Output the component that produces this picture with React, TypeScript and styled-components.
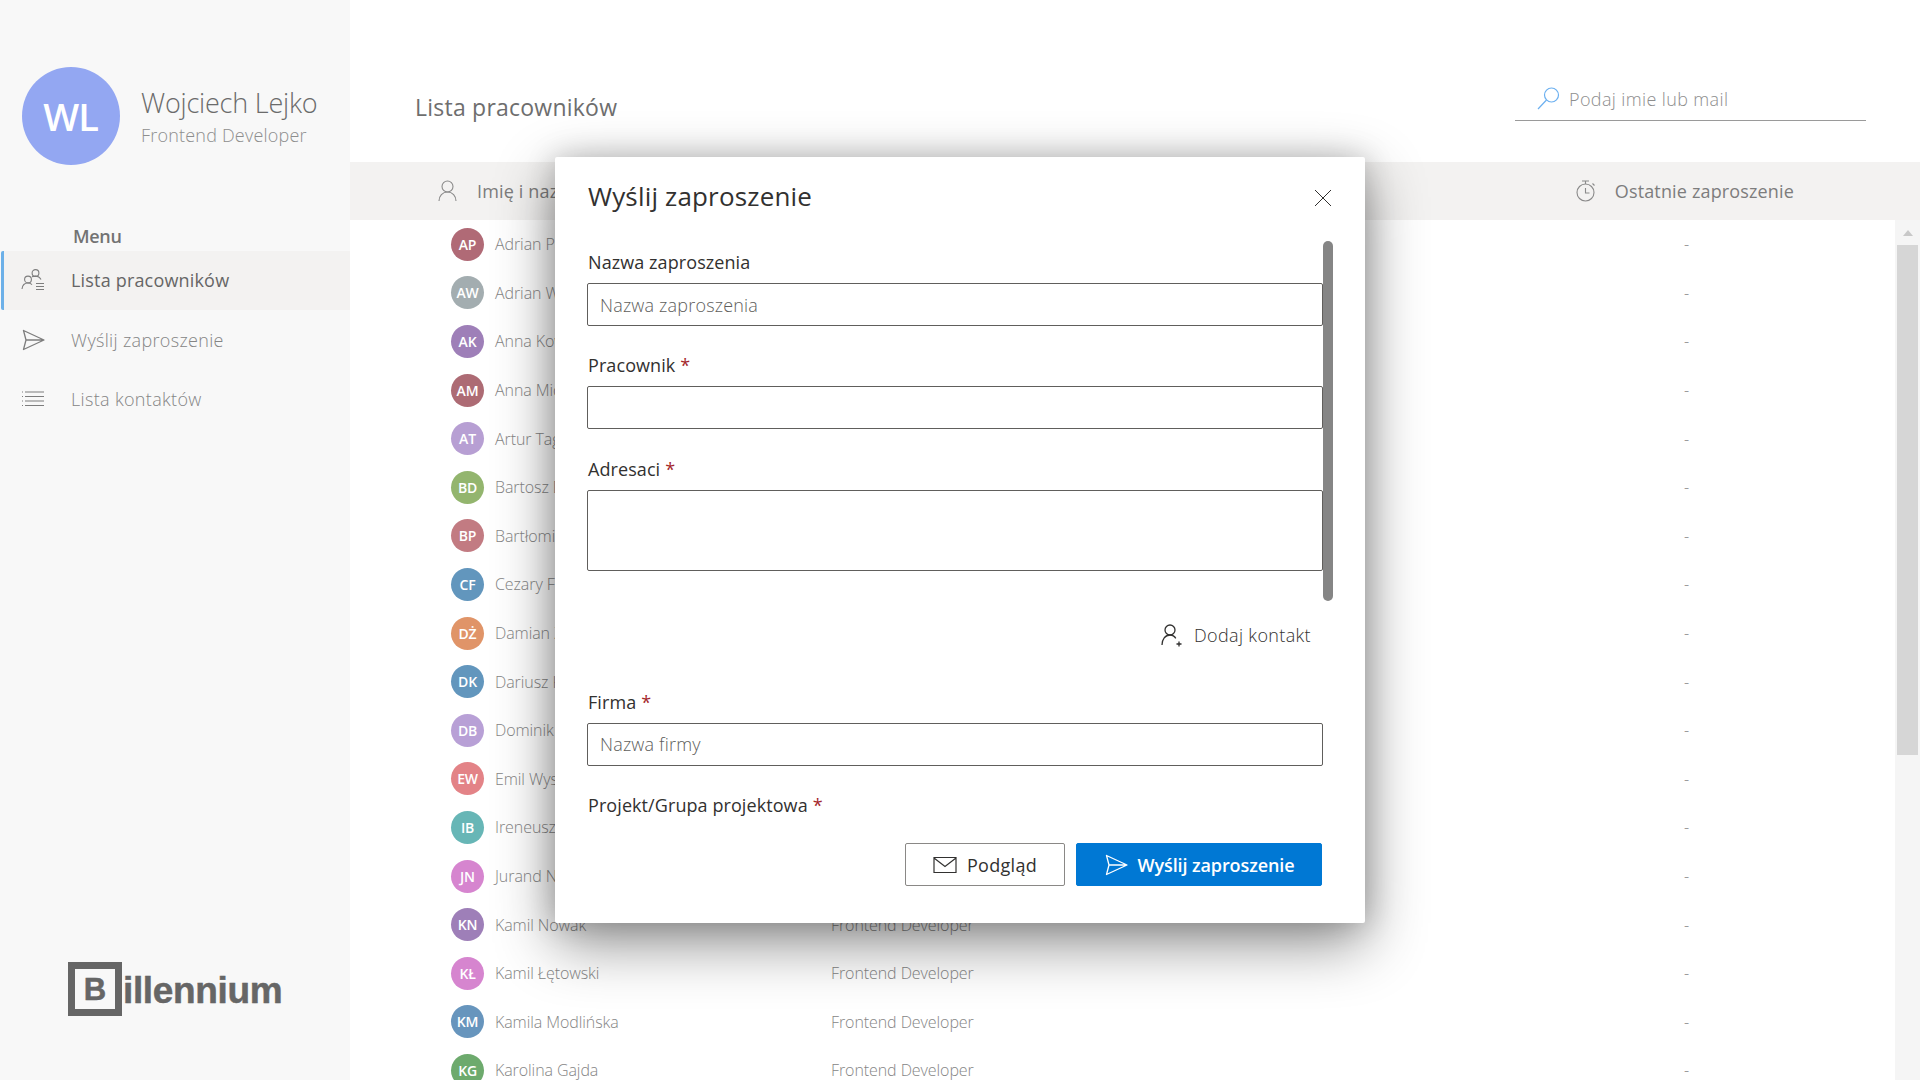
import styled, { createGlobalStyle } from 'styled-components';

const GlobalStyle = createGlobalStyle`
  html, body {
    margin: 0;
    height: 100%;
    overflow: hidden;
    background: #fff;
  }
  body, input, button, textarea {
    font-family: "Open Sans", "Noto Sans", sans-serif;
  }
  * {
    box-sizing: border-box;
  }
`;

const Page = styled.div`
  display: flex;
  width: 1920px;
  height: 1080px;
  overflow: hidden;
  position: relative;
`;

const Sidebar = styled.aside`
  width: 350px;
  flex-shrink: 0;
  display: flex;
  flex-direction: column;
  background: #f8f8f8;
  padding-top: 67px;
`;

const Profile = styled.div`
  display: flex;
  align-items: center;
  gap: 21px;
  padding-left: 22px;
`;

const ProfileAvatar = styled.div`
  width: 98px;
  height: 98px;
  border-radius: 50%;
  background: #93a7f2;
  color: #fff;
  font-size: 38px;
  font-weight: 600;
  letter-spacing: -1px;
  padding-right: 1px;
  display: flex;
  align-items: center;
  justify-content: center;
`;

const ProfileName = styled.div`
  font-size: 27px;
  font-weight: 300;
  line-height: 36px;
  letter-spacing: -0.2px;
  color: #6b6b6b;
`;

const ProfileRole = styled.div`
  margin-top: 1px;
  font-size: 18px;
  font-weight: 300;
  line-height: 26px;
  letter-spacing: 0.2px;
  color: #8e8e8e;
`;

const MenuTitle = styled.div`
  margin: 58px 0 2px 73px;
  font-size: 18px;
  font-weight: 600;
  line-height: 26px;
  letter-spacing: -0.3px;
  color: #737373;
`;

const Nav = styled.nav`
  display: flex;
  flex-direction: column;
  gap: 1px;
`;

const NavItem = styled.div<{ $active?: boolean }>`
  height: 58.5px;
  display: flex;
  align-items: center;
  gap: 26px;
  margin-left: 1px;
  padding-left: 17px;
  font-size: 18px;
  letter-spacing: ${(p) => (p.$active ? '0.18px' : '0.33px')};
  font-weight: ${(p) => (p.$active ? 500 : 300)};
  color: ${(p) => (p.$active ? '#666' : '#858585')};
  background: ${(p) => (p.$active ? '#f3f2f1' : 'transparent')};
  border-left: 3px solid ${(p) => (p.$active ? '#6cb0e8' : 'transparent')};
  border-radius: 2px 0 0 2px;

  svg {
    flex-shrink: 0;
    width: 24px;
    height: 24px;
  }
`;

const Logo = styled.div`
  margin: auto 0 64px 68px;
  display: flex;
  align-items: center;
  gap: 1px;
  color: #666;
  font-family: "Liberation Sans", Arial, sans-serif;
  font-weight: 700;
  -webkit-text-stroke: 0.5px #666;
`;

const LogoBox = styled.div`
  width: 54px;
  height: 54px;
  border: 7px solid #666;
  display: flex;
  align-items: center;
  justify-content: center;
  font-size: 31px;
  line-height: 1;
`;

const LogoText = styled.div`
  font-size: 37px;
  line-height: 1;
  letter-spacing: -0.35px;
  margin-top: 3px;
`;

const Main = styled.main`
  flex: 1;
  min-width: 0;
  display: flex;
  flex-direction: column;
`;

const TopBar = styled.div`
  height: 162px;
  flex-shrink: 0;
  display: flex;
  justify-content: space-between;
  padding: 88px 54px 0 65px;
`;

const PageTitle = styled.h1`
  margin: 0;
  font-size: 23px;
  font-weight: 500;
  line-height: 38px;
  letter-spacing: 0.23px;
  color: #6e6e6e;
`;

const SearchBox = styled.div`
  width: 351px;
  height: 34px;
  margin-top: -1px;
  border-bottom: 1px solid #9a9a9a;
  display: flex;
  align-items: flex-start;
  gap: 9px;
  padding-left: 22px;
  font-size: 18px;
  font-weight: 300;
  line-height: 24px;
  letter-spacing: 0.37px;
  color: #8e8e8e;

  svg {
    width: 23px;
    height: 23px;
    flex-shrink: 0;
  }
`;

const TableHead = styled.div`
  height: 58px;
  flex-shrink: 0;
  background: #f3f2f1;
  display: flex;
  align-items: center;
  justify-content: space-between;
  padding: 0 126px 0 87px;
`;

const HeadCell = styled.div`
  display: flex;
  align-items: center;
  gap: 19px;
  font-size: 18px;
  font-weight: 500;
  letter-spacing: 0.15px;
  color: #7d7d7d;

  svg {
    width: 21px;
    height: 22px;
    flex-shrink: 0;
  }
`;

// the modal sits over the rest of this label, so it only needs its visible part
const NameHeadCell = styled(HeadCell)`
  width: 140px;
  overflow: hidden;
  white-space: nowrap;
`;

const TableBody = styled.div`
  flex: 1;
  min-height: 0;
  display: flex;
`;

const Rows = styled.div`
  flex: 1;
  min-width: 0;
  overflow: hidden;
`;

const Row = styled.div`
  height: 48.6px;
  display: grid;
  grid-template-columns: 380px 853px 1fr;
  align-items: center;
  padding-left: 101px;
  font-size: 16px;
  font-weight: 300;
  letter-spacing: -0.08px;
  color: #858585;
`;

const NameCell = styled.div`
  display: flex;
  align-items: center;
  gap: 11px;
`;

const RowAvatar = styled.div<{ $color: string }>`
  width: 33px;
  height: 33px;
  border-radius: 50%;
  background: ${(p) => p.$color};
  color: #fff;
  font-size: 14px;
  font-weight: 600;
  letter-spacing: -0.2px;
  display: flex;
  align-items: center;
  justify-content: center;
`;

const Scrollbar = styled.div`
  width: 25px;
  flex-shrink: 0;
  background: #f5f5f5;
  padding: 0 2px;
`;

const ScrollArrow = styled.div`
  height: 25px;
  display: flex;
  align-items: center;
  justify-content: center;

  &::before {
    content: '';
    border-left: 5.5px solid transparent;
    border-right: 5.5px solid transparent;
    border-bottom: 6px solid #c8c8c8;
  }
`;

const ScrollThumb = styled.div`
  height: 510px;
  background: #d6d6d6;
`;

const Modal = styled.div`
  position: absolute;
  left: 555px;
  top: 157px;
  width: 810px;
  height: 766px;
  background: #fff;
  border-radius: 2px;
  box-shadow: 0 20px 60px rgba(0, 0, 0, 0.45), 0 0 30px rgba(0, 0, 0, 0.18);
  display: flex;
  flex-direction: column;
`;

const ModalHeader = styled.div`
  height: 84px;
  flex-shrink: 0;
  display: flex;
  align-items: center;
  justify-content: space-between;
  padding: 0 33px 6px 33px;
`;

const ModalTitle = styled.h2`
  margin: 0;
  font-size: 26px;
  font-weight: 500;
  letter-spacing: 0.17px;
  color: #323130;
`;

const CloseButton = styled.button`
  width: 18px;
  height: 18px;
  margin-top: 3px;
  padding: 0;
  border: 0;
  background: none;
  display: flex;
  color: #323130;

  svg {
    width: 18px;
    height: 18px;
  }
`;

const ModalBody = styled.div`
  position: relative;
  flex: 1;
  min-height: 0;
  overflow: hidden;
  padding: 0 42px 0 32px;
`;

const BodyScroll = styled.div`
  position: absolute;
  top: 0;
  right: 32px;
  width: 10px;
  height: 360px;
  border-radius: 5px;
  background: #858585;
`;

const Field = styled.div<{ $tight?: boolean }>`
  margin-bottom: ${(p) => (p.$tight ? '18px' : '18.5px')};
`;

const Label = styled.label`
  display: block;
  height: 42px;
  padding: 7px 0 0 1px;
  font-size: 18px;
  font-weight: 500;
  line-height: 28px;
  letter-spacing: 0.08px;
  color: #323130;

  em {
    font-style: normal;
    color: #a4262c;
    margin-left: 5px;
  }
`;

const TextInput = styled.input`
  display: block;
  width: 100%;
  height: 43px;
  padding: 0 12px;
  border: 1px solid #605e5c;
  border-radius: 2px;
  background: #fff;
  font-size: 18px;
  font-weight: 300;
  letter-spacing: 0.18px;
  color: #323130;
  outline: none;

  &::placeholder {
    color: #605e5c;
    opacity: 1;
  }
`;

const TextArea = styled.textarea`
  display: block;
  width: 100%;
  height: 81px;
  border: 1px solid #605e5c;
  border-radius: 2px;
  background: #fff;
  resize: none;
  outline: none;
`;

const AddContact = styled.div`
  display: flex;
  justify-content: flex-end;
  align-items: center;
  gap: 10px;
  height: 40px;
  margin: 44px 12px 26px 0;
  font-size: 18px;
  font-weight: 300;
  letter-spacing: 0.35px;
  color: #323130;

  svg {
    width: 24px;
    height: 24px;
  }
`;

const ModalFooter = styled.div`
  height: 93px;
  flex-shrink: 0;
  display: flex;
  justify-content: flex-end;
  gap: 11px;
  padding: 13px 43px 0 0;
`;

const FooterButton = styled.button<{ $primary?: boolean }>`
  width: ${(p) => (p.$primary ? '246px' : '160px')};
  height: 43px;
  display: flex;
  align-items: center;
  justify-content: center;
  gap: 10px;
  border: 1px solid ${(p) => (p.$primary ? '#0078d4' : '#8a8886')};
  border-radius: 2px;
  background: ${(p) => (p.$primary ? '#0078d4' : '#fff')};
  color: ${(p) => (p.$primary ? '#fff' : '#323130')};
  font-size: 18px;
  font-weight: ${(p) => (p.$primary ? 600 : 400)};
  letter-spacing: ${(p) => (p.$primary ? '-0.1px' : '0.3px')};
  padding: 0;

  svg {
    width: 24px;
    height: 24px;
  }
`;

const people: [string, string, string][] = [
  ['AP', '#b06a76', 'Adrian Pawlak'],
  ['AW', '#a3adb0', 'Adrian Wilk'],
  ['AK', '#9e7fb8', 'Anna Kowalska'],
  ['AM', '#ad6b74', 'Anna Michalska'],
  ['AT', '#b79fd3', 'Artur Tagowski'],
  ['BD', '#93b56e', 'Bartosz Dudek'],
  ['BP', '#c27b82', 'Bartłomiej Pawlik'],
  ['CF', '#6296bd', 'Cezary Filipek'],
  ['DŻ', '#e09468', 'Damian Żak'],
  ['DK', '#6296bd', 'Dariusz Kania'],
  ['DB', '#b8a0d6', 'Dominik Bąk'],
  ['EW', '#e38387', 'Emil Wysocki'],
  ['IB', '#67b6b6', 'Ireneusz Bielak'],
  ['JN', '#d685cf', 'Jurand Nowicki'],
  ['KN', '#9e7fb8', 'Kamil Nowak'],
  ['KŁ', '#d685cf', 'Kamil Łętowski'],
  ['KM', '#6795bd', 'Kamila Modlińska'],
  ['KG', '#6daa6d', 'Karolina Gajda'],
];

const SendIcon = ({ color }: { color: string }) => (
  <svg viewBox="0 0 24 24" fill="none" stroke={color} strokeWidth="1.3" strokeLinejoin="round">
    <path d="M2.500 2.500 23 12 2.500 21.500 5 12ZM5 12h18" />
  </svg>
);

const PeopleListIcon = () => (
  <svg viewBox="0 0 24 24" fill="none" stroke="#7d7d7d" strokeWidth="1.1">
    <circle cx="14.5" cy="5" r="3.4" />
    <circle cx="7" cy="11.5" r="3.4" />
    <path d="M1 21c.4-3.6 2.600-6 6-6 1.600 0 3 .6 4 1.600M11 8.800c1-.5 2-.7 3.500-.7 2.400 0 4.400 1.300 5.500 3.500" />
    <path d="M15 15.500h8M15 18.500h8M15 21.500h8" />
  </svg>
);

const ListIcon = () => (
  <svg viewBox="0 0 24 24" fill="none" stroke="#7d7d7d" strokeWidth="1.1">
    <path d="M4 5h19M4 9.500h19M4 14h19M4 18.500h19" />
    <path d="M1 5h1M1 9.500h1M1 14h1M1 18.500h1" />
  </svg>
);

const PersonIcon = () => (
  <svg viewBox="0 0 21 22" fill="none" stroke="#8a8a8a" strokeWidth="1.1">
    <circle cx="10.500" cy="6.500" r="5.500" />
    <path d="M2 21c0-5 3.500-9 8.500-9s8.500 4 8.500 9" />
  </svg>
);

const TimerIcon = () => (
  <svg viewBox="0 0 21 22" fill="none" stroke="#8a8a8a" strokeWidth="1.1">
    <circle cx="10.500" cy="12.500" r="8.500" />
    <path d="M7 1h7M10.500 1v3M10.500 8v5h4M17.500 3.500l2 2" />
  </svg>
);

const SearchIcon = () => (
  <svg viewBox="0 0 23 23" fill="none" stroke="#6cb0f0" strokeWidth="1.2">
    <circle cx="14.500" cy="8" r="7" />
    <path d="M9.500 13 1 22" />
  </svg>
);

const AddPersonIcon = () => (
  <svg viewBox="0 0 24 24" fill="none" stroke="#323130" strokeWidth="1.3">
    <circle cx="10" cy="7" r="5" />
    <path d="M2 22c0-5.500 3.200-10 8-10 2.500 0 4.500 1.200 5.800 3.300M19 18.500v5M16.500 21h5" />
  </svg>
);

const MailIcon = () => (
  <svg viewBox="0 0 24 24" fill="none" stroke="#323130" strokeWidth="1.200">
    <path d="M1 4.500h22v15H1ZM1 5l11 8.500L23 5" />
  </svg>
);

const CloseIcon = () => (
  <svg viewBox="0 0 18 18" fill="none" stroke="currentColor" strokeWidth="1">
    <path d="M1 1l16 16M17 1 1 17" />
  </svg>
);

export default function App() {
  return (
    <Page>
      <GlobalStyle />
      <Sidebar>
        <Profile>
          <ProfileAvatar>WL</ProfileAvatar>
          <div>
            <ProfileName>Wojciech Lejko</ProfileName>
            <ProfileRole>Frontend Developer</ProfileRole>
          </div>
        </Profile>
        <MenuTitle>Menu</MenuTitle>
        <Nav>
          <NavItem $active>
            <PeopleListIcon />
            Lista pracowników
          </NavItem>
          <NavItem>
            <SendIcon color="#7d7d7d" />
            Wyślij zaproszenie
          </NavItem>
          <NavItem>
            <ListIcon />
            Lista kontaktów
          </NavItem>
        </Nav>
        <Logo>
          <LogoBox>B</LogoBox>
          <LogoText>illennium</LogoText>
        </Logo>
      </Sidebar>

      <Main>
        <TopBar>
          <PageTitle>Lista pracowników</PageTitle>
          <SearchBox>
            <SearchIcon />
            Podaj imie lub mail
          </SearchBox>
        </TopBar>
        <TableHead>
          <NameHeadCell>
            <PersonIcon />
            Imię i nazwisko
          </NameHeadCell>
          <HeadCell>
            <TimerIcon />
            Ostatnie zaproszenie
          </HeadCell>
        </TableHead>
        <TableBody>
          <Rows>
            {people.map(([initials, color, name]) => (
              <Row key={initials + name}>
                <NameCell>
                  <RowAvatar $color={color}>{initials}</RowAvatar>
                  {name}
                </NameCell>
                <div>Frontend Developer</div>
                <div>-</div>
              </Row>
            ))}
          </Rows>
          <Scrollbar>
            <ScrollArrow />
            <ScrollThumb />
          </Scrollbar>
        </TableBody>
      </Main>

      <Modal>
        <ModalHeader>
          <ModalTitle>Wyślij zaproszenie</ModalTitle>
          <CloseButton>
            <CloseIcon />
          </CloseButton>
        </ModalHeader>
        <ModalBody>
          <BodyScroll />
          <Field $tight>
            <Label>Nazwa zaproszenia</Label>
            <TextInput placeholder="Nazwa zaproszenia" />
          </Field>
          <Field>
            <Label>
              Pracownik<em>*</em>
            </Label>
            <TextInput />
          </Field>
          <Field>
            <Label>
              Adresaci<em>*</em>
            </Label>
            <TextArea />
          </Field>
          <AddContact>
            <AddPersonIcon />
            Dodaj kontakt
          </AddContact>
          <Field>
            <Label>
              Firma<em>*</em>
            </Label>
            <TextInput placeholder="Nazwa firmy" />
          </Field>
          <Field>
            <Label>
              Projekt/Grupa projektowa<em>*</em>
            </Label>
          </Field>
        </ModalBody>
        <ModalFooter>
          <FooterButton>
            <MailIcon />
            Podgląd
          </FooterButton>
          <FooterButton $primary>
            <SendIcon color="#fff" />
            Wyślij zaproszenie
          </FooterButton>
        </ModalFooter>
      </Modal>
    </Page>
  );
}
